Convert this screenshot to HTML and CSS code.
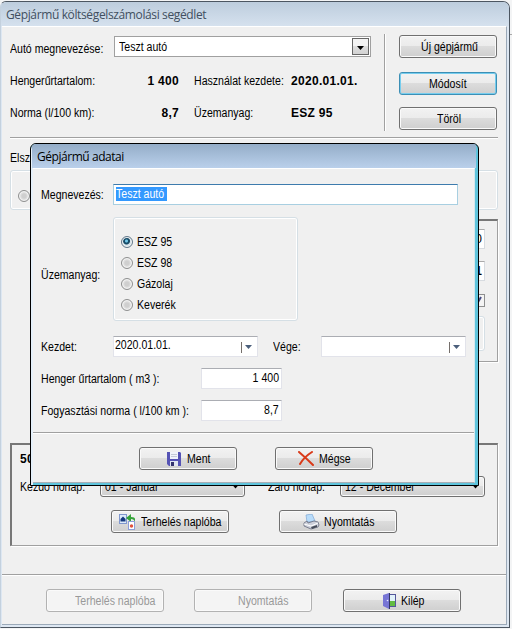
FILE: index.html
```html
<!DOCTYPE html>
<html lang="hu">
<head>
<meta charset="utf-8">
<title>Gépjármű költségelszámolási segédlet</title>
<link rel="stylesheet" href="styles.css">
</head>
<body>
<main class="window">
  <header class="window-title"><span>Gépjármű költségelszámolási segédlet</span></header>
  <div class="window-body">
    <section class="vehicle">
      <div class="info">
        <div class="info-row first"><div class="label"><span class="t">Autó megnevezése:</span></div>
          <div class="combo"><span class="t">Teszt autó</span><i class="drop"></i></div></div>
        <div class="info-row"><div class="label"><span class="t">Hengerűrtartalom:</span></div><b class="amount">1 400</b><div class="label second"><span class="t">Használat kezdete:</span></div><b>2020.01.01.</b></div>
        <div class="info-row"><div class="label"><span class="t">Norma (l/100 km):</span></div><b class="amount">8,7</b><div class="label second"><span class="t">Üzemanyag:</span></div><b class="fuel">ESZ 95</b></div>
      </div>
      <div class="actions">
        <button class="btn new"><span class="t">Új gépjármű</span></button>
        <button class="btn edit"><span class="t">Módosít</span></button>
        <button class="btn del"><span class="t">Töröl</span></button>
      </div>
    </section>
    <div class="calc-label"><span class="t">Elsz</span></div>
    <div class="group calc"><i class="radio"></i></div>
    <div class="results">
      <div class="cell">0</div>
      <div class="cell strong">1</div>
      <div class="tick"><svg width="12" height="12" viewBox="0 0 12 12"><path d="M3 5l2 4 4-7" fill="none" stroke="#454a86" stroke-width="2"/></svg></div>
      <div class="group sub"></div>
    </div>
    <section class="period">
      <b class="count">50</b>
      <div class="months">
        <div class="month-label start"><span class="t">Kezdő hónap:</span></div>
        <div class="btn select"><span class="t">01 - Január</span><i class="arrow"></i></div>
        <div class="month-label end"><span class="t">Záró hónap:</span></div>
        <div class="btn select"><span class="t">12 - December</span><i class="arrow"></i></div>
      </div>
      <div class="period-actions">
        <button class="btn wide log"><svg width="18" height="16" viewBox="0 0 18 16"><rect x=".5" y=".5" width="7" height="9" fill="#dceafa" stroke="#8097ce"/><path d="M1.500 7.500V5L4 2.500 6.500 5v2.500z" fill="#163a80"/><path d="M16 8V5q0-2-4-2V0L7 4l5 4V5q3 0 4 3z" fill="#35a33a"/><rect x="9.500" y="7.500" width="6" height="8" fill="#fff" stroke="#8d9fd8"/><circle cx="12.500" cy="12" r="1.700" fill="#e0523e"/></svg><span class="t">Terhelés naplóba</span></button>
        <button class="btn wide print"><svg width="17" height="16" viewBox="0 0 17 16"><path d="M4 8L3 1l6-1 3 7z" fill="#b8dcfa" stroke="#7fa8d4" stroke-width=".7"/><path d="M1 9l3-2 1 2 6-2 4 1 1 3-1 2-7 2-7-3z" fill="#cdd0da" stroke="#646a7c" stroke-width=".8"/><path d="M1 10l7 2 7-3" stroke="#fff" fill="none"/><path d="M8 13l6-2v2l-5 2z" fill="#454b58"/></svg><span class="t">Nyomtatás</span></button>
      </div>
    </section>
    <footer class="bottom">
      <button class="btn wide off off-log" disabled><span class="t">Terhelés naplóba</span></button>
      <button class="btn wide off off-print" disabled><span class="t">Nyomtatás</span></button>
      <button class="btn wide exit"><svg width="13" height="16" viewBox="0 0 13 16"><rect x="6.500" y="1.500" width="6" height="12" fill="#e1f2fa" stroke="#53579b"/><path d="M7 8h5v5H7z" fill="#62bc42"/><path d="M0 2L6 0v16L0 13z" fill="#7775d5"/><path d="M6.500 0v16" stroke="#333764"/><circle cx="4.500" cy="7.500" r=".8" fill="#e6e8ff"/></svg><span class="t">Kilép</span></button>
    </footer>
  </div>
</main>
<div class="edge"></div>

<section class="dialog">
  <header class="dialog-title"><span>Gépjármű adatai</span></header>
  <div class="dialog-body">
    <div class="row name"><div class="caption"><span class="t">Megnevezés:</span></div><div class="field focus"><span class="selected"><span class="t">Teszt autó</span></span></div></div>
    <div class="row fuels"><div class="caption"><span class="t">Üzemanyag:</span></div>
      <div class="group options">
        <label><i class="radio on"></i><span class="t">ESZ 95</span></label>
        <label><i class="radio"></i><span class="t">ESZ 98</span></label>
        <label><i class="radio"></i><span class="t">Gázolaj</span></label>
        <label><i class="radio"></i><span class="t">Keverék</span></label>
      </div></div>
    <div class="row dates"><div class="caption"><span class="t">Kezdet:</span></div><div class="field date"><span class="t">2020.01.01.</span><i class="picker"></i></div><div class="until"><span class="t">Vége:</span></div><div class="field date"><i class="picker"></i></div></div>
    <div class="row"><div class="caption long"><span class="t">Henger űrtartalom ( m3 ):</span></div><div class="field num"><span class="t">1 400</span></div></div>
    <div class="row"><div class="caption long"><span class="t">Fogyasztási norma ( l/100 km ):</span></div><div class="field num"><span class="t">8,7</span></div></div>
    <div class="dialog-actions">
      <button class="btn save"><svg width="14" height="14" viewBox="0 0 14 14"><path d="M0 0h13l1 1v13H2l-2-2z" fill="#5553b5"/><path d="M3 0h8v7H3z" fill="#f1f4fa"/><path d="M4 2.500h6M4 4.500h6" stroke="#c5cad7"/><path d="M3 9h8v5H3z" fill="#dfe5f0"/><path d="M4 10h3v4H4z" fill="#34346f"/></svg><span class="t">Ment</span></button>
      <button class="btn cancel"><svg width="17" height="15" viewBox="0 0 17 15"><path d="M1 1Q8 7 15 14M14 1Q6 6 2 13" fill="none" stroke="#d93a19" stroke-width="2" stroke-linecap="round"/></svg><span class="t">Mégse</span></button>
    </div>
  </div>
</section>
</body>
</html>
```
FILE: styles.css
```css
* { box-sizing: border-box; }
body { margin: 0; width: 512px; height: 629px; overflow: hidden; display: flex; background: #f3f4f5; font: 12px/14px "Liberation Sans", Arial, sans-serif; color: #000; }
i { display: block; flex: none; }
svg { display: block; flex: none; }
.t { display: inline-block; white-space: pre; transform: scaleX(.88); transform-origin: 0 50%; }
b { font-size: 12px; letter-spacing: .3px; white-space: pre; }

.window { flex: none; width: 510px; height: 627px; margin-top: 1px; border: 1px solid #4c5661; border-left-color: #c4d1de; border-radius: 6px 7px 0 0; background: #dde7f2; padding: 0 2px 2px 1px; overflow: hidden; }
.window-title { height: 24px; margin: 0 -2px 0 -1px; padding: 4px 0 0 5px; background: linear-gradient(#bdcddd, #d5e1ee); color: #414f60; font: 12px/17px "Open Sans", "Noto Sans", sans-serif; letter-spacing: -.37px; white-space: nowrap; }
.window-body { height: 599px; border: 1px solid #9ba9b8; border-left: 0; border-top-color: #fff; background: #f0f0f0; }
.edge { width: 2px; height: 1px; margin-top: 34px; background: #aaa; }

.vehicle { height: 111px; margin: 0 8px; padding-top: 7px; display: flex; border-bottom: 1px solid #a0a0a0; box-shadow: 0 1px #fff; }
.info { width: 375px; height: 97px; border-right: 1px solid #a0a0a0; box-shadow: 1px 0 #fff; }
.info-row { height: 32px; display: flex; align-items: center; }
.info-row.first { height: 31px; align-items: flex-start; padding-top: 2px; }
.first .label { padding-top: 6px; }
.label { width: 104px; flex: none; }
.label.second { width: 97px; margin-left: 15px; }
.amount { width: 65px; text-align: right; }
.combo { width: 257px; height: 21px; display: flex; justify-content: space-between; background: #fff; border: 1px solid #a0a0a0; padding: 1px 1px 1px 4px; }
.combo .t { margin-top: 2px; }
.drop { width: 17px; height: 17px; border: 1px solid #666; background: linear-gradient(#f3f3f3 45%, #dedede 50%, #d2d2d2); padding: 7px 0 0 4px; }
.drop::after, .arrow::after, .picker::after { content: ""; display: block; width: 7px; height: 4px; background: #000; clip-path: polygon(0 0, 100% 0, 50% 100%); }
.actions { margin-left: 14px; display: flex; flex-direction: column; }

.btn { width: 98px; height: 23px; flex: none; display: flex; align-items: center; margin: 0; padding: 0; border: 1px solid #707070; border-radius: 3px; background: linear-gradient(#f2f2f2, #ebebeb 49%, #dcdcdc 50%, #cfcfcf); box-shadow: inset 0 0 0 1px #fafafa; font: inherit; color: #000; }
.new { margin-top: 1px; padding-left: 21px; }
.edit { margin-top: 14px; padding-left: 29px; border-color: #3c8fb5; box-shadow: inset 0 0 0 1px #76cdee; }
.del { margin-top: 12px; padding-left: 37px; }
.wide { width: 118px; }

.calc-label { height: 32px; padding: 13px 0 0 8px; }
.group { border: 1px solid #d5dfe5; border-radius: 3px; box-shadow: inset 0 0 0 1px #fff; }
.calc { width: 488px; height: 40px; margin-left: 8px; padding: 19px 0 0 7px; }
.radio { width: 12px; height: 12px; border: 1px solid #8e8f8f; border-radius: 50%; background: radial-gradient(circle, #cfcfcf 0 2px, #e6e6e6 4px); box-shadow: inset 0 0 0 1px #f4f4f4; }
.radio.on { border-color: #62788a; background: radial-gradient(circle at 45% 40%, #72c8e8 0 1px, #164b68 2px 3px, #d6e3ea 4px); }
.results { width: 300px; height: 143px; margin: 9px 0 0 196px; padding: 8px 12px 0 0; display: flex; flex-direction: column; align-items: flex-end; border: 2px solid #a0a0a0; border-width: 2px 1px 1px 2px; border-top-color: #777; box-shadow: 1px 1px #fff; }
.cell { width: 80px; height: 20px; margin-bottom: 12px; padding: 2px 2px; text-align: right; background: #fff; border: 1px solid #d7dbe0; border-top-color: #aaa; }
.strong { font-weight: bold; }
.tick { width: 14px; height: 13px; margin-top: 1px; border: 1px solid #8e8f8f; background: #f4f4f4; }
.sub { width: 240px; height: 35px; margin-top: 9px; }

.period { width: 488px; height: 103px; margin: 81px 0 0 8px; padding: 7px 0 0 8px; border: 2px solid #777; border-width: 2px 1px 1px 2px; border-right-color: #a0a0a0; border-bottom-color: #a0a0a0; box-shadow: 1px 1px #fff; }
.count { display: block; height: 24px; }
.months { display: flex; height: 22px; }
.month-label { padding-top: 4px; }
.start { width: 80px; }
.end { width: 72px; margin-left: 23px; }
.select { width: 145px; height: 21px; padding: 0 5px 0 4px; justify-content: space-between; }
.period-actions { display: flex; margin: 12px 0 0 91px; gap: 50px; }
.log { padding-left: 7px; gap: 4px; }
.print { padding-left: 23px; gap: 4px; }
.bottom { height: 51px; margin-top: 28px; padding: 14px 0 0 44px; display: flex; border-top: 1px solid #a0a0a0; box-shadow: inset 0 1px #fff; }
.off { background: #f4f4f4; border-color: #b2b2b2; color: #999; }
.off-log { padding-left: 28px; }
.off-print { margin-left: 30px; padding-left: 43px; }
.exit { margin-left: 31px; padding-left: 39px; gap: 5px; }

.dialog { position: absolute; left: 30px; top: 143px; width: 449px; height: 343px; border: 1px solid #000; border-radius: 6px 6px 0 0; overflow: hidden; background: #5fc4dc; padding: 0 3px 2px 2px; box-shadow: inset 2px 0 #e5f0fa; }
.dialog-title { height: 24px; margin: 0 -1px 0 -1px; padding: 4px 0 0 5px; background: linear-gradient(#94adc8, #bad0eb); font: 12px/17px "Open Sans", "Noto Sans", sans-serif; letter-spacing: -.45px; }
.dialog-body { height: 315px; background: #f0f0f0; border-top: 1px solid #fff; border-right: 1px solid #d5e7ed; border-bottom: 1px solid #a9aeb5; padding-top: 15px; }
.row { display: flex; height: 32px; padding-left: 8px; }
.caption { width: 72px; flex: none; padding-top: 4px; }
.caption.long { width: 160px; }
.field { width: 81px; height: 21px; flex: none; background: #fff; border: 1px solid #e2e3ea; border-top-color: #abadb3; padding: 2px; }
.focus { width: 345px; border-color: #a8cfe1; border-top-color: #3d7bad; }
.name { height: 33px; }
.selected { display: block; width: 51px; height: 14px; background: #3399ff; color: #fff; line-height: 14px; }
.fuels { height: 119px; }
.fuels .caption { padding-top: 51px; }
.options { width: 185px; height: 104px; padding: 13px 0 0 7px; }
.options label { display: flex; align-items: center; height: 21px; gap: 4px; }
.date { width: 145px; display: flex; justify-content: space-between; padding: 1px 3px 1px 1px; }
.picker { width: 13px; height: 11px; margin: 4px 0 0 auto; border-left: 1px solid #756f6b; padding: 3px 0 0 3px; }
.picker::after { background: #4b5f7b; }
.until { width: 48px; margin-left: 15px; padding-top: 4px; }
.num { text-align: right; }
.num .t { transform-origin: 100% 50%; }
.dialog-actions { height: 50px; display: flex; gap: 38px; border-top: 1px solid #a0a0a0; box-shadow: inset 0 1px #fff; padding: 14px 0 0 106px; }
.save { padding-left: 27px; gap: 6px; }
.cancel { padding-left: 22px; gap: 4px; }
```
